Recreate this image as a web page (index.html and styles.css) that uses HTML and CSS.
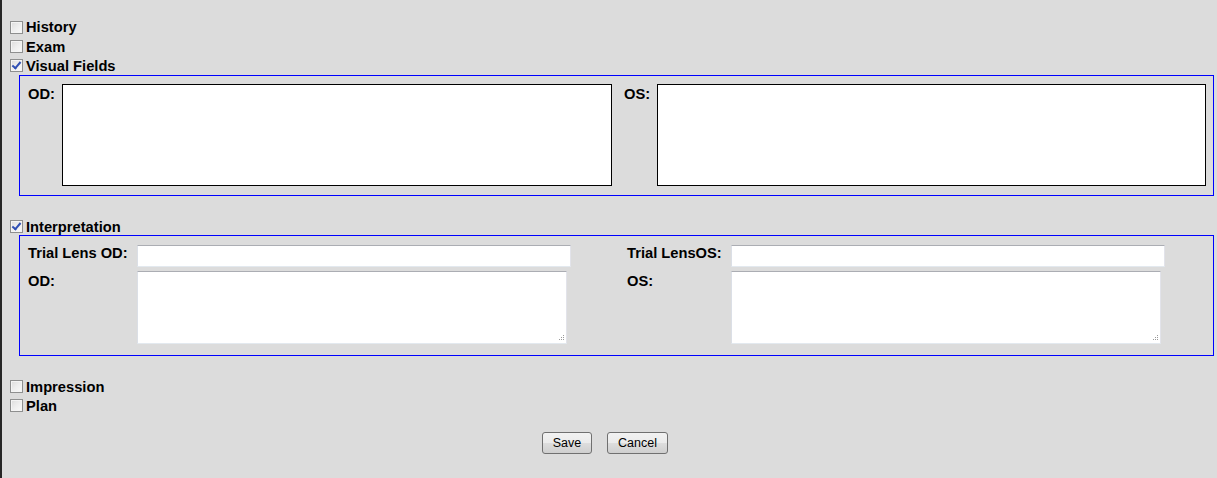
FILE: index.html
```html
<!DOCTYPE html>
<html>
<head>
<meta charset="utf-8">
<link rel="stylesheet" href="styles.css">
</head>
<body>
<div class="page">
  <label class="check-row first"><input type="checkbox" class="cb"><span>History</span></label>
  <label class="check-row"><input type="checkbox" class="cb"><span>Exam</span></label>
  <label class="check-row"><input type="checkbox" class="cb" checked><span>Visual Fields</span></label>

  <div class="panel vf-panel">
    <div class="vf-pair">
      <span class="lbl vf-lbl od">OD:</span>
      <textarea class="vf-box od-box"></textarea>
    </div>
    <div class="vf-pair second">
      <span class="lbl vf-lbl os">OS:</span>
      <textarea class="vf-box os-box"></textarea>
    </div>
  </div>

  <label class="check-row interp-row"><input type="checkbox" class="cb" checked><span>Interpretation</span></label>

  <div class="panel interp-panel">
    <span class="lbl">Trial Lens OD:</span>
    <input type="text" class="field">
    <span></span>
    <span class="lbl">Trial LensOS:</span>
    <input type="text" class="field">

    <span class="lbl row2">OD:</span>
    <div class="ta-wrap"><textarea class="field ta"></textarea><svg class="grip" width="7" height="7" viewBox="0 0 7 7"><rect x="5" y="0" width="1" height="1"/><rect x="3" y="2" width="1" height="1"/><rect x="5" y="2" width="1" height="1"/><rect x="1" y="4" width="1" height="1"/><rect x="3" y="4" width="1" height="1"/><rect x="5" y="4" width="1" height="1"/></svg></div>
    <span></span>
    <span class="lbl row2">OS:</span>
    <div class="ta-wrap"><textarea class="field ta"></textarea><svg class="grip" width="7" height="7" viewBox="0 0 7 7"><rect x="5" y="0" width="1" height="1"/><rect x="3" y="2" width="1" height="1"/><rect x="5" y="2" width="1" height="1"/><rect x="1" y="4" width="1" height="1"/><rect x="3" y="4" width="1" height="1"/><rect x="5" y="4" width="1" height="1"/></svg></div>
  </div>

  <label class="check-row impression-row"><input type="checkbox" class="cb"><span>Impression</span></label>
  <label class="check-row"><input type="checkbox" class="cb"><span>Plan</span></label>

  <div class="buttons">
    <button class="btn save">Save</button>
    <button class="btn cancel">Cancel</button>
  </div>
</div>
</body>
</html>
```

FILE: styles.css
```css
html, body {
  margin: 0;
  padding: 0;
  background: #dcdcdc;
}

.page {
  box-sizing: border-box;
  min-height: 478px;
  border-left: 2px solid #262626;
  padding: 17px 0 0 8px;
  font-family: "Liberation Sans", Arial, sans-serif;
  font-size: 14.7px;
  font-weight: bold;
  color: #000;
}

.check-row {
  display: flex;
  align-items: center;
  height: 19px;
  gap: 3px;
}

.check-row.first {
  height: 20px;
}

.cb {
  -webkit-appearance: none;
  appearance: none;
  box-sizing: border-box;
  width: 13px;
  height: 13px;
  margin: 0;
  border: 1px solid #8e8f8f;
  background: linear-gradient(135deg, #dcdcdc 0%, #eeeeee 50%, #fafafa 100%);
  box-shadow: inset 0 0 0 1px #f4f4f4;
  position: relative;
  flex: none;
}

.cb:checked::after {
  content: "";
  position: absolute;
  left: 3px;
  top: 0px;
  width: 3px;
  height: 7px;
  border-right: 2px solid #2f4fb4;
  border-bottom: 2px solid #2f4fb4;
  transform: rotate(40deg);
}

.panel {
  border-width: 1px;
  border-style: solid;
  border-color: rgb(0, 0, 255);
  margin: 0 3px 0 9px;
}

.vf-panel {
  display: flex;
  padding: 8px 7px 9px 8px;
}

.vf-pair {
  display: flex;
  align-items: flex-start;
}

.vf-pair.second {
  margin-left: 12px;
}

.vf-lbl {
  padding-top: 2px;
}

.od {
  width: 34px;
}

.os {
  width: 33px;
}

.vf-box {
  box-sizing: border-box;
  height: 102px;
  border: 1px solid #000;
  background: #fff;
  margin: 0;
  padding: 0;
  resize: none;
  outline: none;
}

.od-box {
  width: 550px;
}

.os-box {
  width: 549px;
}

.interp-row {
  margin-top: 21px;
}

.interp-panel {
  display: grid;
  grid-template-columns: 109px 434px 56px 104px 434px;
  grid-template-rows: 22px 73px;
  row-gap: 4px;
  padding: 9px 7px 11px 8px;
  margin-top: -1px;
}

.lbl {
  line-height: 17px;
  white-space: nowrap;
}

.lbl.row2 {
  padding-top: 2px;
}

.field {
  box-sizing: border-box;
  margin: 0;
  padding: 0;
  background: #fff;
  border: 1px solid;
  border-color: #abadb3 #e2e3ea #e3e9ef #dbdfe6;
  outline: none;
  font: inherit;
}

input.field {
  width: 434px;
  height: 22px;
}

.ta-wrap {
  position: relative;
  width: 430px;
  height: 73px;
}

.ta {
  width: 430px;
  height: 73px;
  resize: none;
  display: block;
}

.grip {
  position: absolute;
  right: 2px;
  bottom: 2px;
  fill: #9a9a9a;
}

.impression-row {
  margin-top: 21px;
}

.buttons {
  display: flex;
  justify-content: center;
  gap: 15px;
  margin-top: 17px;
  padding-right: 17px;
}

.btn {
  box-sizing: border-box;
  height: 22px;
  margin: 0;
  padding: 0;
  border: 1px solid #707070;
  border-radius: 3px;
  background: linear-gradient(to bottom, #f2f2f2 0%, #ebebeb 50%, #dddddd 51%, #cfcfcf 100%);
  font-family: "Liberation Sans", Arial, sans-serif;
  font-size: 12.5px;
  font-weight: normal;
  color: #000;
}

.save {
  width: 50px;
}

.cancel {
  width: 61px;
}
```
